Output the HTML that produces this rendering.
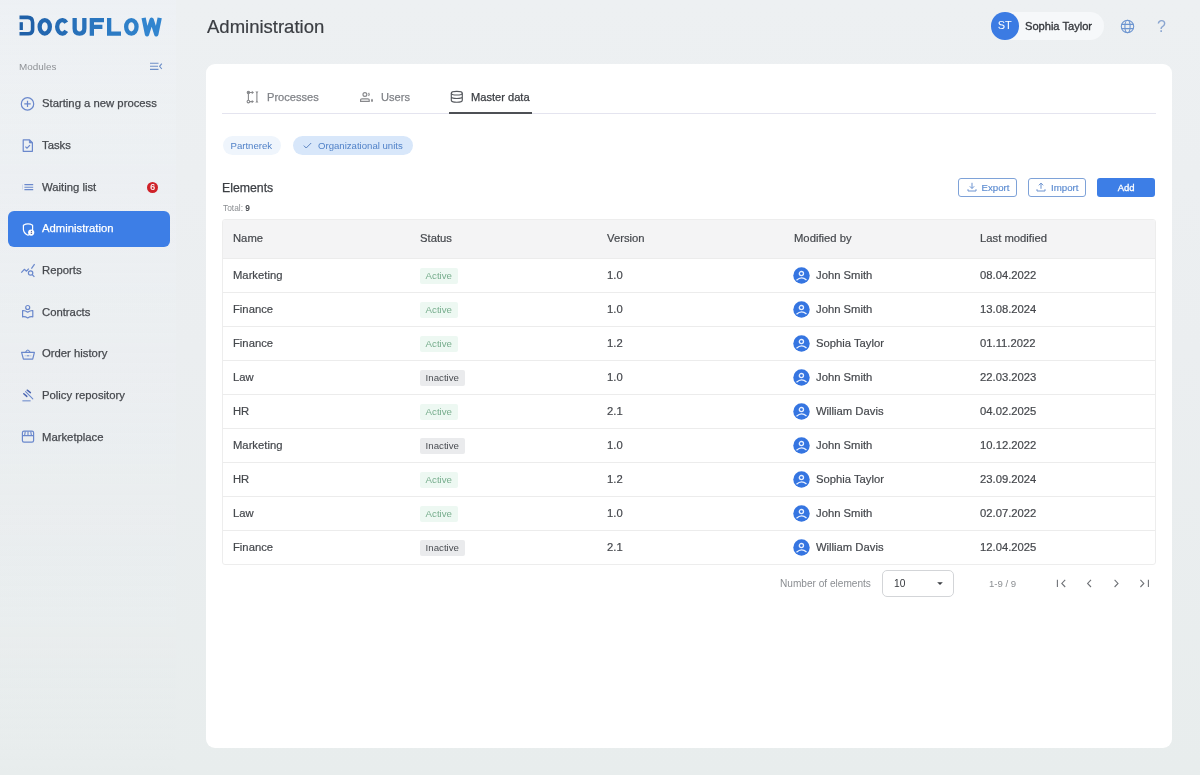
<!DOCTYPE html>
<html><head><meta charset="utf-8">
<style>
*{box-sizing:border-box;margin:0;padding:0}
html,body{width:1200px;height:775px;overflow:hidden}
body{background:linear-gradient(180deg,#edf0f2 0%,#ebeef0 45%,#e8eded 100%);font-family:"Liberation Sans",sans-serif;color:#3c3f44;position:relative}
.abs{position:absolute;white-space:nowrap;will-change:transform}
.title{left:206.5px;top:15.5px;font-size:18.5px;color:#3a3d42;line-height:22px;-webkit-text-stroke:0.2px #3a3d42}
.mod{left:19px;top:61px;font-size:9.9px;color:#8f9296;line-height:12px}
.navt{left:41.9px;font-size:11.3px;line-height:14px;color:#46494e;-webkit-text-stroke:0.25px #46494e}
.navt.act{color:#fff;-webkit-text-stroke:0.25px #fff}
.activebg{left:8px;top:211px;width:161.5px;height:36px;border-radius:6px;background:#3d7ee6}
.badge{left:147.1px;top:181.6px;width:11.4px;height:11.4px;border-radius:50%;background:#cf2229;color:#fff;font-size:8.6px;text-align:center;line-height:11.6px;-webkit-text-stroke:0.2px #fff}
.card{left:205.5px;top:64px;width:966.4px;height:683.5px;background:#fff;border-radius:9px}
.tab{top:89.6px;font-size:11.1px;line-height:14px;color:#808388;-webkit-text-stroke:0.25px #808388}
.chip{top:136.2px;height:19px;border-radius:10px;font-size:9.6px;color:#5182c8;line-height:20px}
.btn{top:177.5px;height:19px;border-radius:3px;font-size:9.7px;line-height:17px;-webkit-text-stroke:0.15px currentColor}
.tblbox{left:222px;top:219px;width:934.4px;height:345.8px;border:1px solid #ededed;border-radius:3px;background:#fff}
.th{left:223px;top:220px;width:932.4px;height:37.5px;background:#f4f4f5;border-radius:2px 2px 0 0}
.hl{left:223px;width:932.4px;height:1px;background:#ececec}
.td{font-size:11.25px;line-height:14px;color:#45484d;-webkit-text-stroke:0.2px #45484d}
.st{height:15.6px;font-size:9.7px;line-height:16.6px;padding:0 5.6px;border-radius:2px}
.st.a{background:#edf8f2;color:#78ae8e}
.st.i{background:#eaebed;color:#4a4d52}
</style></head><body>
<div class="abs" style="left:0;top:0;width:176px;height:775px;background:linear-gradient(180deg,rgba(240,244,250,0.3) 0%,rgba(240,244,250,0.15) 50%,rgba(240,244,250,0) 100%)"></div>
<!-- logo -->
<svg class="abs" style="left:0;top:0" width="180" height="50" viewBox="0 0 180 50">
 <g fill="none" stroke-width="4.3"><ellipse cx="44.75" cy="26.80" rx="5.10" ry="6.75" stroke="#2367b0"/><path d="M66.27 22.64A5.10 6.75 0 1 0 66.27 30.96" stroke="#256cb5"/><path d="M74.65 17.9V28.6C74.65 32.6 76.85 33.55 79.50 33.55C82.15 33.55 84.35 32.6 84.35 28.6V17.9" stroke="#2871ba"/><path d="M91.85 35.7V20.05H104.00M91.85 26.9H102.40" stroke="#2a76bf"/><path d="M109.15 17.9V33.55H121.00" stroke="#2c7bc4"/><ellipse cx="131.35" cy="26.80" rx="5.20" ry="6.75" stroke="#2f80c9"/><path d="M143.60 17.9L147.00 34.40L151.65 19.70L156.30 34.40L159.70 17.9" stroke-linejoin="round" stroke="#3285cf"/></g>
 <path d="M19.5 17.4H27.6Q32.6 17.4 32.6 22.6V29.8Q32.6 33.8 28.2 33.8H19.5" fill="none" stroke="#1f60a8" stroke-width="3.6"/>
 <rect x="19.6" y="22.2" width="3.3" height="7.8" fill="#1f60a8"/>
</svg>
<div class="abs title">Administration</div>

<!-- user chip -->
<div class="abs" style="left:992px;top:12px;width:112px;height:28px;border-radius:14px;background:#f6f8fa"></div>
<div class="abs" style="left:991.3px;top:12.3px;width:27.5px;height:27.5px;border-radius:50%;background:#3b7be3;color:#fff;font-size:11px;line-height:27.5px;text-align:center">ST</div>
<div class="abs" style="left:1025.2px;top:19.4px;font-size:11.1px;line-height:14px;color:#36393e;-webkit-text-stroke:0.35px #36393e">Sophia Taylor</div>
<svg class="abs" style="left:1120px;top:19px" width="15" height="15" viewBox="0 0 15 15"><g fill="none" stroke="#6d95d0" stroke-width="1.1"><circle cx="7.5" cy="7.5" r="6.2"/><ellipse cx="7.5" cy="7.5" rx="2.6" ry="6.2"/><path d="M1.5 5.4H13.5M1.5 9.6H13.5"/></g></svg>
<div class="abs" style="left:1157.2px;top:16.5px;font-size:16px;line-height:19px;color:#8aa5d0">?</div>

<div class="abs mod">Modules</div>
<svg class="abs" style="left:148px;top:60px" width="16" height="12" viewBox="0 0 16 12"><path d="M2 3.2H10.5M2 6.3H10M2 9.4H10.5" stroke="#6d8fc8" stroke-width="1.1"/><path d="M13.8 3.6L11.6 6.3L13.8 9" fill="none" stroke="#6d8fc8" stroke-width="1.1"/></svg>

<div class="abs activebg"></div>
<svg class="abs" style="left:17px;top:93.0px" width="22" height="22" viewBox="0 0 22 22"><circle cx="10.5" cy="10.9" r="6.2" fill="none" stroke="#6a88cc" stroke-width="1.2"/><path d="M7.3 10.9H13.7M10.5 7.7V14.1" stroke="#6a88cc" stroke-width="1.2"/></svg>
<div class="abs navt" style="top:96.2px">Starting a new process</div>
<svg class="abs" style="left:17px;top:135.0px" width="22" height="22" viewBox="0 0 22 22"><g><path d="M6.2 4.9H12.6L15.4 7.7V16.3H6.2Z" fill="none" stroke="#6a88cc" stroke-width="1.2" stroke-linejoin="round"/><path d="M12.4 4.9V7.9H15.4" fill="#6a88cc" stroke="#6a88cc" stroke-width="0.8"/><path d="M8.4 11.6L10 13.2L13 10.1" fill="none" stroke="#6a88cc" stroke-width="1.2"/></g></svg>
<div class="abs navt" style="top:137.9px">Tasks</div>
<svg class="abs" style="left:17px;top:176.0px" width="22" height="22" viewBox="0 0 22 22"><path d="M7.4 8.6H16.2M7.4 11.2H16.2M7.4 13.6H16.2" stroke="#6a88cc" stroke-width="1.1"/><path d="M5.4 8.6V13.6" stroke="#6a88cc" stroke-width="0.5" opacity="0.5"/></svg>
<div class="abs navt" style="top:179.6px">Waiting list</div>
<svg class="abs" style="left:17px;top:218.0px" width="22" height="22" viewBox="0 0 22 22"><path d="M6.4 7.2Q11 4.4 15.6 7.2V11.6Q15 15.6 11 17.2Q7 15.6 6.4 11.6Z" fill="none" stroke="#fff" stroke-width="1.2" stroke-linejoin="round"/><circle cx="14.2" cy="14.6" r="3.1" fill="#fff"/><circle cx="14.4" cy="13.3" r="0.6" fill="#3b4a8a"/><rect x="13.7" y="14.7" width="1.4" height="1.1" fill="#3b4a8a"/></svg>
<div class="abs navt act" style="top:221.3px">Administration</div>
<svg class="abs" style="left:17px;top:259.0px" width="22" height="22" viewBox="0 0 22 22"><path d="M4.3 13.6L7.3 10.3L9.5 12.2L11.8 9.6" fill="none" stroke="#6a88cc" stroke-width="1.2" stroke-linejoin="round"/><path d="M14.4 9.6L17.6 5.1" stroke="#6a88cc" stroke-width="1.2"/><circle cx="13.6" cy="14" r="2.2" fill="none" stroke="#6a88cc" stroke-width="1.2"/><path d="M15.2 15.6L17.4 17.9" stroke="#6a88cc" stroke-width="1.2"/></svg>
<div class="abs navt" style="top:263.0px">Reports</div>
<svg class="abs" style="left:17px;top:300.0px" width="22" height="22" viewBox="0 0 22 22"><circle cx="10.7" cy="7.5" r="2" fill="none" stroke="#6a88cc" stroke-width="1.2"/><path d="M5.6 10.5Q8.2 10.3 10.7 12.2Q13.2 10.3 15.8 10.5V16.8Q13.2 16.4 10.7 17.9Q8.2 16.4 5.6 16.8Z" fill="none" stroke="#6a88cc" stroke-width="1.2" stroke-linejoin="round"/></svg>
<div class="abs navt" style="top:304.7px">Contracts</div>
<svg class="abs" style="left:17px;top:342.0px" width="22" height="22" viewBox="0 0 22 22"><path d="M4.6 10.4H17.4L15.7 17.2H6.4Z" fill="none" stroke="#6a88cc" stroke-width="1.2" stroke-linejoin="round"/><path d="M8.6 10.2Q10.8 5.8 13 10.2" fill="none" stroke="#6a88cc" stroke-width="1.2"/><path d="M7.6 13.8H14.4" stroke="#6a88cc" stroke-width="0.6" opacity="0.6"/><circle cx="11" cy="13.8" r="0.8" fill="#6a88cc"/></svg>
<div class="abs navt" style="top:346.4px">Order history</div>
<svg class="abs" style="left:17px;top:384.0px" width="22" height="22" viewBox="0 0 22 22"><path d="M10.2 6.2L13.4 8.6M6.8 9.8L9.8 12.4" stroke="#4a64b0" stroke-width="1.5" stroke-linecap="round"/><path d="M8.6 7.6L15.8 14.8" stroke="#6a88cc" stroke-width="1.1" stroke-linecap="round"/><path d="M5.4 16.8H13.6" stroke="#6a88cc" stroke-width="1.3" opacity="0.8"/></svg>
<div class="abs navt" style="top:388.1px">Policy repository</div>
<svg class="abs" style="left:17px;top:425.0px" width="22" height="22" viewBox="0 0 22 22"><rect x="5.4" y="6.2" width="11.2" height="11" rx="1.6" fill="none" stroke="#6a88cc" stroke-width="1.2"/><path d="M5.4 10.6H16.6M8.3 6.4L7.6 10.4M11 6.4V10.4M13.7 6.4L14.4 10.4" stroke="#6a88cc" stroke-width="1.1"/></svg>
<div class="abs navt" style="top:429.8px">Marketplace</div>
<div class="abs badge">6</div>

<div class="abs card"></div>

<!-- tabs -->
<svg class="abs" style="left:243px;top:87px" width="20" height="20" viewBox="0 0 20 20"><g fill="none" stroke="#88898c" stroke-width="1.1"><circle cx="5.4" cy="5.5" r="1.2" fill="#88898c"/><circle cx="5.4" cy="14.6" r="1.3"/><path d="M5.4 6.6V13.3M6.6 5.5H9M6.7 14.6H9M13.9 5.6V14.4" /></g><path d="M8.8 3.8L11 5.5L8.8 7.2Z M8.8 12.9L11 14.6L8.8 16.3Z M12.4 4.4H15.4L13.9 6.4Z M12.4 15.6H15.4L13.9 13.6Z" fill="#88898c"/></svg>
<div class="abs tab" style="left:266.5px">Processes</div>
<svg class="abs" style="left:356px;top:87px" width="20" height="20" viewBox="0 0 20 20"><g fill="none" stroke="#88898c" stroke-width="1.2"><circle cx="8.9" cy="7.5" r="1.9"/><path d="M4.6 14.4V12.8Q4.6 11.8 6 11.8H11.8Q13.2 11.8 13.2 12.8V14.4Z"/><path d="M12.6 5.8Q13.8 7.4 12.6 9"/></g><ellipse cx="16" cy="13.4" rx="0.9" ry="1.6" fill="#88898c"/></svg>
<div class="abs tab" style="left:380.5px">Users</div>
<svg class="abs" style="left:447px;top:87px" width="20" height="20" viewBox="0 0 20 20"><g fill="none" stroke="#55585d" stroke-width="1.15"><ellipse cx="9.8" cy="6.2" rx="5.5" ry="1.8"/><path d="M4.3 6.2V13.2Q4.3 15.2 9.8 15.2Q15.3 15.2 15.3 13.2V6.2M4.3 9.8Q4.3 11.5 9.8 11.5Q15.3 11.5 15.3 9.8"/></g></svg>
<div class="abs tab" style="left:471px;color:#3a3d42;-webkit-text-stroke:0.25px #3a3d42">Master data</div>
<div class="abs" style="left:222px;top:112.5px;width:934px;height:1.2px;background:#e4e4ef"></div>
<div class="abs" style="left:448.5px;top:112px;width:83px;height:2px;background:#4d5055"></div>

<!-- chips -->
<div class="abs chip" style="left:223px;width:58px;background:#eff5fc;padding-left:7.5px">Partnerek</div>
<div class="abs chip" style="left:292.5px;width:120px;background:#d8e7fa;padding-left:25px">Organizational units</div>
<svg class="abs" style="left:302px;top:140.2px" width="11" height="11" viewBox="0 0 11 11"><path d="M1.8 5.6L4.2 8L9.2 3" fill="none" stroke="#5a82c0" stroke-width="1"/></svg>

<div class="abs" style="left:221.7px;top:180.6px;font-size:12.3px;line-height:15px;color:#3c3f44;-webkit-text-stroke:0.25px #3c3f44">Elements</div>
<div class="abs" style="left:222.5px;top:203px;font-size:8.4px;line-height:10px;color:#8b8e92">Total: <b style="color:#4a4d52">9</b></div>

<!-- buttons -->
<div class="abs btn" style="left:957.9px;width:58.8px;border:1px solid #7ea2d8;color:#5a8ad0;padding-left:22.5px">Export</div>
<svg class="abs" style="left:965.5px;top:181px" width="12" height="12" viewBox="0 0 12 12"><path d="M6 1.8V7.4M3.8 5.3L6 7.5L8.2 5.3M2 8.2V10H10V8.2" fill="none" stroke="#6d93d0" stroke-width="1"/></svg>
<div class="abs btn" style="left:1027.7px;width:58px;border:1px solid #7ea2d8;color:#5a8ad0;padding-left:22px">Import</div>
<svg class="abs" style="left:1034.6px;top:181px" width="12" height="12" viewBox="0 0 12 12"><path d="M6 7.8V2.2M3.8 4.3L6 2.1L8.2 4.3M2 8.2V10H10V8.2" fill="none" stroke="#6d93d0" stroke-width="1"/></svg>
<div class="abs btn" style="left:1097.2px;width:58.2px;background:#3d7ee6;color:#fff;line-height:19px;text-align:center;font-size:9.5px;-webkit-text-stroke:0.3px #fff">Add</div>

<!-- table -->
<div class="abs tblbox"></div>
<div class="abs th"></div>
<div class="abs hl" style="top:257.5px"></div>
<div class="abs td" style="left:233px;top:230.7px">Name</div>
<div class="abs td" style="left:420px;top:230.7px">Status</div>
<div class="abs td" style="left:607px;top:230.7px">Version</div>
<div class="abs td" style="left:793.5px;top:230.7px">Modified by</div>
<div class="abs td" style="left:980.3px;top:230.7px">Last modified</div>
<div class="abs td" style="left:233px;top:268.0px">Marketing</div>
<div class="abs st a" style="left:420px;top:267.6px">Active</div>
<div class="abs td" style="left:607px;top:268.0px">1.0</div>
<svg class="abs" style="left:793px;top:266.5px" width="17" height="17" viewBox="0 0 17 17"><circle cx="8.5" cy="8.5" r="8.2" fill="#3575e1"/><circle cx="8.4" cy="6.6" r="2.1" fill="none" stroke="#e8f0ff" stroke-width="1.3"/><path d="M3.5 13.3Q8.5 8.6 13.5 13.1" fill="none" stroke="#e8f0ff" stroke-width="1.3"/></svg>
<div class="abs td" style="left:815.5px;top:268.0px">John Smith</div>
<div class="abs td" style="left:980px;top:268.0px">08.04.2022</div>
<div class="abs hl" style="top:291.5px"></div>
<div class="abs td" style="left:233px;top:302.0px">Finance</div>
<div class="abs st a" style="left:420px;top:301.6px">Active</div>
<div class="abs td" style="left:607px;top:302.0px">1.0</div>
<svg class="abs" style="left:793px;top:300.5px" width="17" height="17" viewBox="0 0 17 17"><circle cx="8.5" cy="8.5" r="8.2" fill="#3575e1"/><circle cx="8.4" cy="6.6" r="2.1" fill="none" stroke="#e8f0ff" stroke-width="1.3"/><path d="M3.5 13.3Q8.5 8.6 13.5 13.1" fill="none" stroke="#e8f0ff" stroke-width="1.3"/></svg>
<div class="abs td" style="left:815.5px;top:302.0px">John Smith</div>
<div class="abs td" style="left:980px;top:302.0px">13.08.2024</div>
<div class="abs hl" style="top:325.5px"></div>
<div class="abs td" style="left:233px;top:336.0px">Finance</div>
<div class="abs st a" style="left:420px;top:335.6px">Active</div>
<div class="abs td" style="left:607px;top:336.0px">1.2</div>
<svg class="abs" style="left:793px;top:334.5px" width="17" height="17" viewBox="0 0 17 17"><circle cx="8.5" cy="8.5" r="8.2" fill="#3575e1"/><circle cx="8.4" cy="6.6" r="2.1" fill="none" stroke="#e8f0ff" stroke-width="1.3"/><path d="M3.5 13.3Q8.5 8.6 13.5 13.1" fill="none" stroke="#e8f0ff" stroke-width="1.3"/></svg>
<div class="abs td" style="left:815.5px;top:336.0px">Sophia Taylor</div>
<div class="abs td" style="left:980px;top:336.0px">01.11.2022</div>
<div class="abs hl" style="top:359.5px"></div>
<div class="abs td" style="left:233px;top:370.0px">Law</div>
<div class="abs st i" style="left:420px;top:369.6px">Inactive</div>
<div class="abs td" style="left:607px;top:370.0px">1.0</div>
<svg class="abs" style="left:793px;top:368.5px" width="17" height="17" viewBox="0 0 17 17"><circle cx="8.5" cy="8.5" r="8.2" fill="#3575e1"/><circle cx="8.4" cy="6.6" r="2.1" fill="none" stroke="#e8f0ff" stroke-width="1.3"/><path d="M3.5 13.3Q8.5 8.6 13.5 13.1" fill="none" stroke="#e8f0ff" stroke-width="1.3"/></svg>
<div class="abs td" style="left:815.5px;top:370.0px">John Smith</div>
<div class="abs td" style="left:980px;top:370.0px">22.03.2023</div>
<div class="abs hl" style="top:393.5px"></div>
<div class="abs td" style="left:233px;top:404.0px">HR</div>
<div class="abs st a" style="left:420px;top:403.6px">Active</div>
<div class="abs td" style="left:607px;top:404.0px">2.1</div>
<svg class="abs" style="left:793px;top:402.5px" width="17" height="17" viewBox="0 0 17 17"><circle cx="8.5" cy="8.5" r="8.2" fill="#3575e1"/><circle cx="8.4" cy="6.6" r="2.1" fill="none" stroke="#e8f0ff" stroke-width="1.3"/><path d="M3.5 13.3Q8.5 8.6 13.5 13.1" fill="none" stroke="#e8f0ff" stroke-width="1.3"/></svg>
<div class="abs td" style="left:815.5px;top:404.0px">William Davis</div>
<div class="abs td" style="left:980px;top:404.0px">04.02.2025</div>
<div class="abs hl" style="top:427.5px"></div>
<div class="abs td" style="left:233px;top:438.0px">Marketing</div>
<div class="abs st i" style="left:420px;top:437.6px">Inactive</div>
<div class="abs td" style="left:607px;top:438.0px">1.0</div>
<svg class="abs" style="left:793px;top:436.5px" width="17" height="17" viewBox="0 0 17 17"><circle cx="8.5" cy="8.5" r="8.2" fill="#3575e1"/><circle cx="8.4" cy="6.6" r="2.1" fill="none" stroke="#e8f0ff" stroke-width="1.3"/><path d="M3.5 13.3Q8.5 8.6 13.5 13.1" fill="none" stroke="#e8f0ff" stroke-width="1.3"/></svg>
<div class="abs td" style="left:815.5px;top:438.0px">John Smith</div>
<div class="abs td" style="left:980px;top:438.0px">10.12.2022</div>
<div class="abs hl" style="top:461.5px"></div>
<div class="abs td" style="left:233px;top:472.0px">HR</div>
<div class="abs st a" style="left:420px;top:471.6px">Active</div>
<div class="abs td" style="left:607px;top:472.0px">1.2</div>
<svg class="abs" style="left:793px;top:470.5px" width="17" height="17" viewBox="0 0 17 17"><circle cx="8.5" cy="8.5" r="8.2" fill="#3575e1"/><circle cx="8.4" cy="6.6" r="2.1" fill="none" stroke="#e8f0ff" stroke-width="1.3"/><path d="M3.5 13.3Q8.5 8.6 13.5 13.1" fill="none" stroke="#e8f0ff" stroke-width="1.3"/></svg>
<div class="abs td" style="left:815.5px;top:472.0px">Sophia Taylor</div>
<div class="abs td" style="left:980px;top:472.0px">23.09.2024</div>
<div class="abs hl" style="top:495.5px"></div>
<div class="abs td" style="left:233px;top:506.0px">Law</div>
<div class="abs st a" style="left:420px;top:505.6px">Active</div>
<div class="abs td" style="left:607px;top:506.0px">1.0</div>
<svg class="abs" style="left:793px;top:504.5px" width="17" height="17" viewBox="0 0 17 17"><circle cx="8.5" cy="8.5" r="8.2" fill="#3575e1"/><circle cx="8.4" cy="6.6" r="2.1" fill="none" stroke="#e8f0ff" stroke-width="1.3"/><path d="M3.5 13.3Q8.5 8.6 13.5 13.1" fill="none" stroke="#e8f0ff" stroke-width="1.3"/></svg>
<div class="abs td" style="left:815.5px;top:506.0px">John Smith</div>
<div class="abs td" style="left:980px;top:506.0px">02.07.2022</div>
<div class="abs hl" style="top:529.5px"></div>
<div class="abs td" style="left:233px;top:540.0px">Finance</div>
<div class="abs st i" style="left:420px;top:539.6px">Inactive</div>
<div class="abs td" style="left:607px;top:540.0px">2.1</div>
<svg class="abs" style="left:793px;top:538.5px" width="17" height="17" viewBox="0 0 17 17"><circle cx="8.5" cy="8.5" r="8.2" fill="#3575e1"/><circle cx="8.4" cy="6.6" r="2.1" fill="none" stroke="#e8f0ff" stroke-width="1.3"/><path d="M3.5 13.3Q8.5 8.6 13.5 13.1" fill="none" stroke="#e8f0ff" stroke-width="1.3"/></svg>
<div class="abs td" style="left:815.5px;top:540.0px">William Davis</div>
<div class="abs td" style="left:980px;top:540.0px">12.04.2025</div>

<!-- pagination -->
<div class="abs" style="left:779.5px;top:577px;font-size:10.1px;line-height:13px;color:#8b8e92">Number of elements</div>
<div class="abs" style="left:882px;top:570px;width:72.2px;height:27.2px;border:1px solid #d3d5d8;border-radius:5px;background:#fff"></div>
<div class="abs" style="left:893.5px;top:577px;font-size:10.2px;line-height:13px;color:#34373c">10</div>
<svg class="abs" style="left:936px;top:581px" width="8" height="5" viewBox="0 0 8 5"><path d="M1.2 1.2H6.8L4 4Z" fill="#3a3d42"/></svg>
<div class="abs" style="left:988.5px;top:577px;font-size:9.6px;line-height:13px;color:#8b8e92">1-9 / 9</div>
<svg class="abs" style="left:1054px;top:576px" width="100" height="14" viewBox="0 0 100 14"><g fill="none" stroke="#6f7277" stroke-width="1.1"><path d="M3.4 3.8V11M11.2 3.8L7.8 7.4L11.2 11"/><path d="M37 3.8L33.6 7.4L37 11"/><path d="M60.6 3.8L64 7.4L60.6 11"/><path d="M86.4 3.8L89.8 7.4L86.4 11M94.4 3.8V11"/></g></svg>
</body></html>
